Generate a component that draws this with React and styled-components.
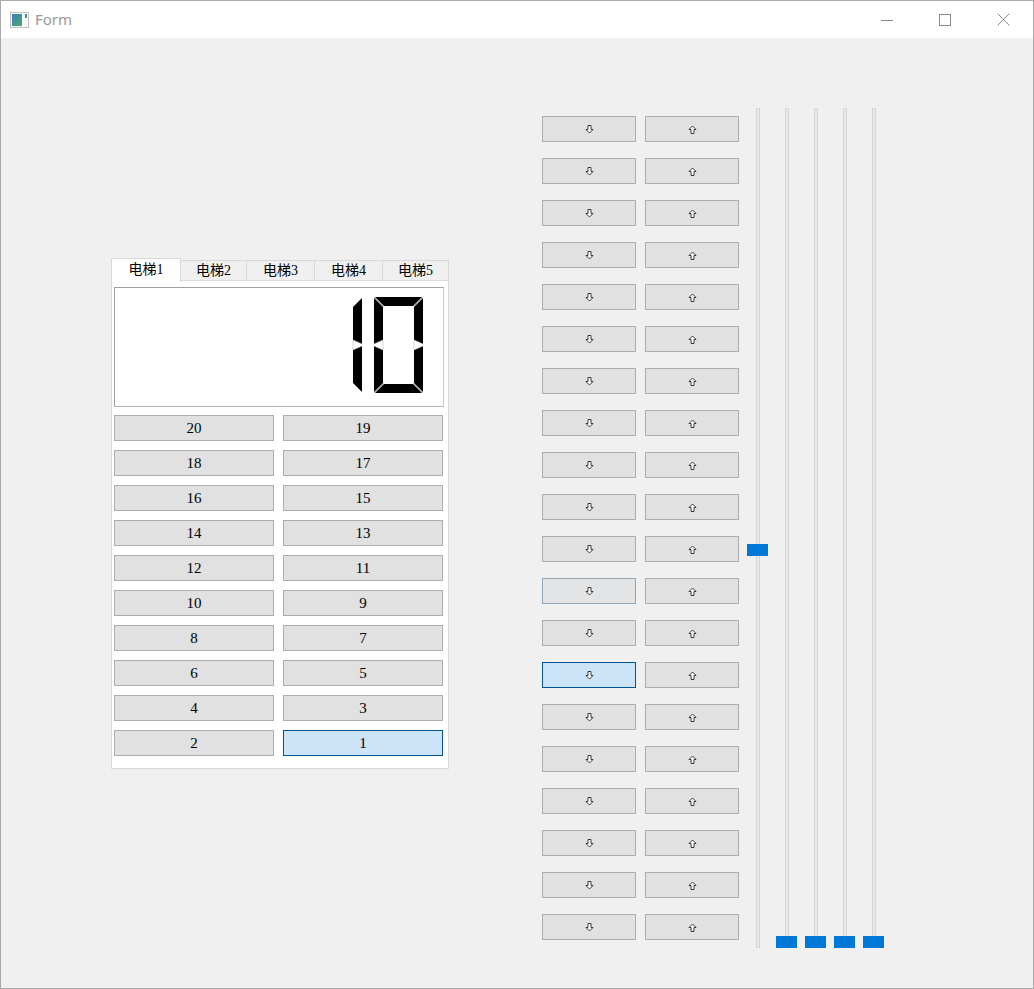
import React from "react";
import styled, { createGlobalStyle } from "styled-components";

const GlobalStyle = createGlobalStyle`
  html, body {
    margin: 0;
    padding: 0;
    background: #ffffff;
  }
  * {
    box-sizing: border-box;
  }
`;

const TABS = [
  { label: "电梯1", width: 70 },
  { label: "电梯2", width: 67 },
  { label: "电梯3", width: 69 },
  { label: "电梯4", width: 69 },
  { label: "电梯5", width: 67 },
];

const FLOORS = [20, 19, 18, 17, 16, 15, 14, 13, 12, 11, 10, 9, 8, 7, 6, 5, 4, 3, 2, 1];
const SLIDERS = [47.35, 0, 0, 0, 0];

// seven segment geometry
const T = 9;
const W = 49;
const H = 96;
const M = H / 2;
const N = 4;
const SEGS = {
  a: [[1, 0], [W - 1, 0], [W - 1 - T, T], [1 + T, T]],
  b: [[W, 1], [W, M - 1], [W - T, M - 1 - N], [W - T, T + 1]],
  c: [[W, M + 1], [W, H - 1], [W - T, H - 1 - T], [W - T, M + 1 + N]],
  d: [[1, H], [W - 1, H], [W - 1 - T, H - T], [1 + T, H - T]],
  e: [[0, M + 1], [0, H - 1], [T, H - 1 - T], [T, M + 1 + N]],
  f: [[0, 1], [0, M - 1], [T, M - 1 - N], [T, T + 1]],
};
const DIGIT_SEGS = { 1: ["b", "c"], 0: ["a", "b", "c", "d", "e", "f"] };

const Digit = ({ value, x }) => {
  const on = DIGIT_SEGS[value];
  return (
    <g transform={`translate(${x},0)`}>
      {on.map((s) => (
        <polygon key={s} points={SEGS[s].map((p) => p.join(",")).join(" ")} fill="#000" />
      ))}
      {on.includes("a") && (
        <>
          <line x1="0.5" y1="0.5" x2={T + 0.5} y2={T + 0.5} stroke="#a6a6a6" strokeWidth="1" />
          <line x1={W - 0.5} y1="0.5" x2={W - T - 0.5} y2={T + 0.5} stroke="#a6a6a6" strokeWidth="1" />
          <line x1="0.5" y1={H - 0.5} x2={T + 0.5} y2={H - T - 0.5} stroke="#a6a6a6" strokeWidth="1" />
          <line x1={W - 0.5} y1={H - 0.5} x2={W - T - 0.5} y2={H - T - 0.5} stroke="#a6a6a6" strokeWidth="1" />
        </>
      )}
      {on.includes("b") && (
        <polyline
          points={`${W},${M - 1} ${W - T},${M - 1 - N} ${W - T},${M + 1 + N} ${W},${M + 1}`}
          fill="none"
          stroke="#bdbdbd"
          strokeWidth="0.6"
        />
      )}
      {on.includes("f") && (
        <polyline
          points={`0,${M - 1} ${T},${M - 1 - N} ${T},${M + 1 + N} 0,${M + 1}`}
          fill="none"
          stroke="#bdbdbd"
          strokeWidth="0.6"
        />
      )}
    </g>
  );
};

const AppIcon = () => (
  <svg width="19" height="16" viewBox="0 0 19 16">
    <defs>
      <linearGradient id="ig" x1="0" y1="0" x2="1" y2="1">
        <stop offset="0" stopColor="#3d7fc4" />
        <stop offset="1" stopColor="#4caa63" />
      </linearGradient>
    </defs>
    <rect x="0.5" y="0.5" width="18" height="15" fill="#f7f7f7" stroke="#c4c4c4" />
    <rect x="2" y="2" width="10" height="12" fill="url(#ig)" />
    <rect x="15" y="2" width="2" height="4" fill="url(#ig)" />
  </svg>
);

const Window = styled.div`
  width: 1034px;
  height: 989px;
  border: 1px solid #a9a9a9;
  display: flex;
  flex-direction: column;
  background: #f0f0f0;
`;

const TitleBar = styled.div`
  height: 37px;
  flex: none;
  background: #ffffff;
  display: flex;
  align-items: center;
  padding-left: 9px;
`;

const Title = styled.span`
  margin-left: 6px;
  font-family: "Noto Sans", "Liberation Sans", sans-serif;
  font-size: 15px;
  color: #9a9a9a;
  flex: 1;
  padding-bottom: 1px;
`;

const Caption = styled.div`
  display: flex;
  height: 100%;
  margin-right: 1px;
`;

const CaptionButton = styled.div`
  width: 58px;
  height: 100%;
  display: flex;
  align-items: center;
  justify-content: center;
`;

const Client = styled.div`
  flex: 1;
  display: flex;
  align-items: flex-start;
`;

const ElevatorPanel = styled.div`
  margin-left: 110px;
  margin-top: 220px;
  width: 338px;
  display: flex;
  flex-direction: column;
`;

const TabBar = styled.div`
  display: flex;
  align-items: flex-end;
  height: 23px;
  position: relative;
  z-index: 1;
`;

const Tab = styled.div`
  width: ${(p) => p.$width}px;
  height: ${(p) => (p.$active ? 24 : 21)}px;
  margin-left: ${(p) => (p.$first ? 0 : -1)}px;
  margin-bottom: ${(p) => (p.$active ? -1 : 0)}px;
  border: 1px solid #d9d9d9;
  border-bottom: ${(p) => (p.$active ? "none" : "1px solid #d9d9d9")};
  background: ${(p) => (p.$active ? "#ffffff" : "#f0f0f0")};
  display: flex;
  align-items: center;
  justify-content: center;
  padding-bottom: ${(p) => (p.$active ? 5 : 3)}px;
  font-family: "Liberation Serif", "Noto Sans CJK SC", serif;
  font-size: 14px;
  color: #000;
`;

const Pane = styled.div`
  border: 1px solid #d9d9d9;
  margin-top: -1px;
  background: #ffffff;
  padding: 6px 3px 12px 2px;
`;

const Lcd = styled.div`
  width: 330px;
  height: 120px;
  border: 1px solid #a0a0a0;
  border-right-color: #c8c8c8;
  border-bottom-color: #b4b4b4;
  display: flex;
  justify-content: flex-end;
  align-items: flex-start;
  padding: 9px 19px 0 0;
`;

const FloorGrid = styled.div`
  margin-top: 8px;
  display: grid;
  grid-template-columns: 160px 160px;
  grid-auto-rows: 26px;
  column-gap: 9px;
  row-gap: 9px;
`;

const FloorButton = styled.div`
  border: 1px solid ${(p) => (p.$active ? "#005499" : "#adadad")};
  background: ${(p) => (p.$active ? "#cce4f7" : "#e1e1e1")};
  display: flex;
  align-items: center;
  justify-content: center;
  padding-top: 1px;
  font-family: "Liberation Serif", "Noto Sans CJK SC", serif;
  font-size: 15px;
  color: #000;
`;

const CallGrid = styled.div`
  margin-left: 93px;
  margin-top: 78px;
  display: grid;
  grid-template-columns: 94px 94px;
  grid-auto-rows: 26px;
  column-gap: 9px;
  row-gap: 16px;
`;

const CallButton = styled.div`
  border: 1px solid
    ${(p) => (p.$state === "active" ? "#005499" : p.$state === "hover" ? "#8fa6bc" : "#adadad")};
  background: ${(p) =>
    p.$state === "active" ? "#cce4f7" : p.$state === "hover" ? "#e3e4e6" : "#e1e1e1"};
  display: flex;
  align-items: center;
  justify-content: center;
`;

const SliderRow = styled.div`
  margin-left: 8px;
  margin-top: 70px;
  display: flex;
  gap: 8px;
`;

const Slider = styled.div`
  position: relative;
  width: 21px;
  height: 840px;
  display: flex;
  justify-content: center;
`;

const Track = styled.div`
  width: 4px;
  height: 100%;
  border: 1px solid #d6d6d6;
  background: #e7e8e8;
`;

const Handle = styled.div`
  position: absolute;
  left: 0;
  width: 21px;
  height: 12px;
  background: #0078d7;
`;

const Arrow = ({ down }) => (
  <svg width="9" height="9" viewBox="0 0 9 9">
    <polygon
      points={
        down
          ? "3,0.5 6,0.5 6,4.5 8,4.5 4.5,8 1,4.5 3,4.5"
          : "3,8.5 6,8.5 6,4.5 8,4.5 4.5,1 1,4.5 3,4.5"
      }
      fill="#fff"
      stroke="#3a3a3a"
      strokeWidth="1"
      strokeLinejoin="miter"
    />
  </svg>
);

const callState = (row, down) => {
  if (down && row === 13) return "active";
  if (down && row === 11) return "hover";
  return "normal";
};

export default function App() {
  return (
    <>
      <GlobalStyle />
      <Window>
        <TitleBar>
          <AppIcon />
          <Title>Form</Title>
          <Caption>
            <CaptionButton>
              <svg width="12" height="12" viewBox="0 0 12 12">
                <line x1="0" y1="6.5" x2="12" y2="6.5" stroke="#8c8c8c" strokeWidth="1" />
              </svg>
            </CaptionButton>
            <CaptionButton>
              <svg width="12" height="12" viewBox="0 0 12 12">
                <rect x="0.5" y="0.5" width="11" height="11" fill="none" stroke="#8c8c8c" strokeWidth="1" />
              </svg>
            </CaptionButton>
            <CaptionButton>
              <svg width="13" height="13" viewBox="0 0 13 13">
                <path d="M0.5 0.5 L12.5 12.5 M12.5 0.5 L0.5 12.5" stroke="#8c8c8c" strokeWidth="1" />
              </svg>
            </CaptionButton>
          </Caption>
        </TitleBar>
        <Client>
          <ElevatorPanel>
            <TabBar>
              {TABS.map((t, i) => (
                <Tab key={t.label} $width={t.width} $active={i === 0} $first={i === 0}>
                  {t.label}
                </Tab>
              ))}
            </TabBar>
            <Pane>
              <Lcd>
                <svg width="110" height="97" viewBox="0 0 110 97">
                  <Digit value={1} x={-1} />
                  <Digit value={0} x={60} />
                </svg>
              </Lcd>
              <FloorGrid>
                {FLOORS.map((f) => (
                  <FloorButton key={f} $active={f === 1}>
                    {f}
                  </FloorButton>
                ))}
              </FloorGrid>
            </Pane>
          </ElevatorPanel>
          <CallGrid>
            {Array.from({ length: 20 }).map((_, row) => (
              <React.Fragment key={row}>
                <CallButton $state={callState(row, true)}>
                  <Arrow down />
                </CallButton>
                <CallButton $state={callState(row, false)}>
                  <Arrow />
                </CallButton>
              </React.Fragment>
            ))}
          </CallGrid>
          <SliderRow>
            {SLIDERS.map((v, i) => (
              <Slider key={i}>
                <Track />
                <Handle style={{ top: `${Math.round((1 - v / 100) * 828)}px` }} />
              </Slider>
            ))}
          </SliderRow>
        </Client>
      </Window>
    </>
  );
}
